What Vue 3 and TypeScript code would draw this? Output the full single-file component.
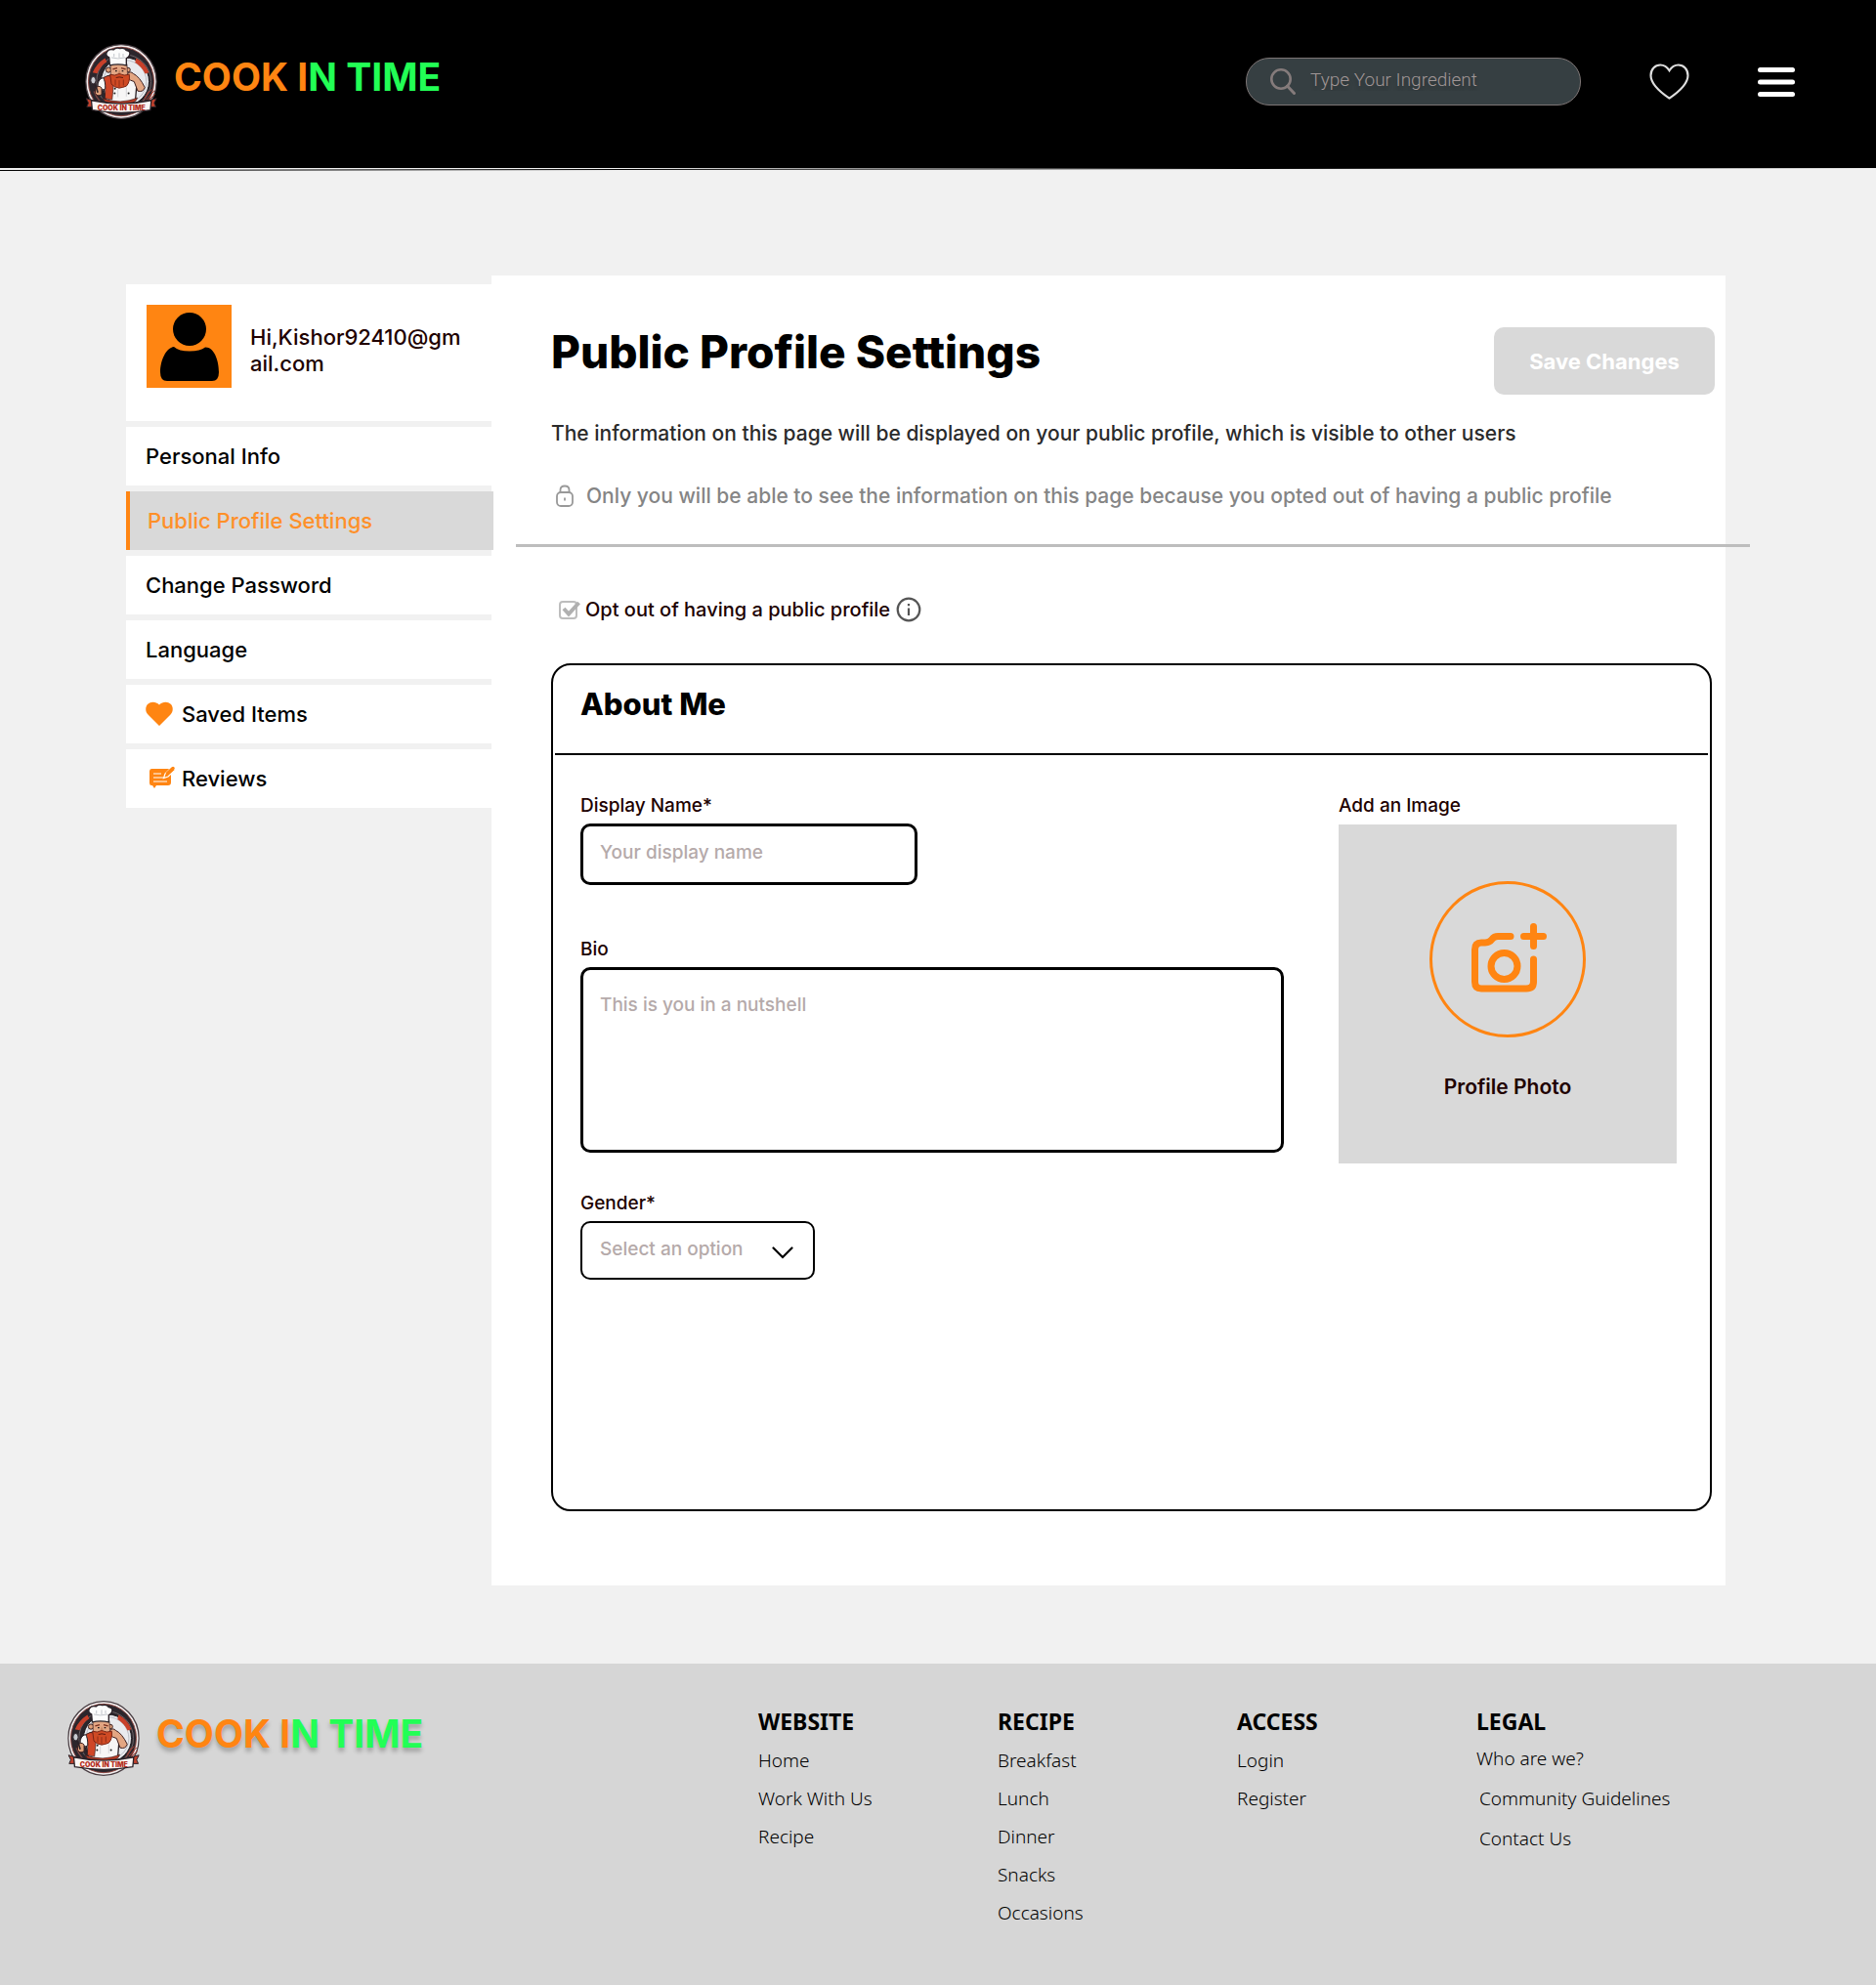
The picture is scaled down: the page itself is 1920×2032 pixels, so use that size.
<script setup lang="ts">
import { ref } from 'vue'

interface MenuItem {
  label: string
  icon?: 'heart' | 'review'
  active?: boolean
}

interface FooterColumn {
  title: string
  links: string[]
  loose?: boolean
}

const menu: MenuItem[] = [
  { label: 'Personal Info' },
  { label: 'Public Profile Settings', active: true },
  { label: 'Change Password' },
  { label: 'Language' },
  { label: 'Saved Items', icon: 'heart' },
  { label: 'Reviews', icon: 'review' },
]

const columns: FooterColumn[] = [
  { title: 'WEBSITE', links: ['Home', 'Work With Us', 'Recipe'] },
  { title: 'RECIPE', links: ['Breakfast', 'Lunch', 'Dinner', 'Snacks', 'Occasions'] },
  { title: 'ACCESS', links: ['Login', 'Register'] },
  { title: 'LEGAL', links: ['Who are we?', 'Community Guidelines', 'Contact Us'], loose: true },
]

const search = ref('')
const optOut = ref(true)
const displayName = ref('')
const bio = ref('')
const gender = ref('')
</script>

<template>
  <div class="page">
    <svg class="sprite" aria-hidden="true">
      <symbol id="chef" viewBox="57 184 222 232">
        <ellipse cx="168" cy="300" rx="109" ry="114" fill="#f3eeee" stroke="#4a3f44" stroke-width="4" />
        <ellipse cx="168" cy="300" rx="101" ry="106" fill="#2c262c" stroke="#8d4a45" stroke-width="3" />
        <circle cx="176" cy="300" r="84" fill="none" stroke="#6d6468" stroke-width="3" />
        <circle cx="180" cy="300" r="74" fill="#e9eaee" stroke="#1d191e" stroke-width="3" />
        <circle cx="180" cy="300" r="66" fill="none" stroke="#b9bcc4" stroke-width="3" />
        <path d="M80 272Q92 245 118 228L124 239Q104 252 94 275Z" fill="#c8402a" />
        <path d="M214 228Q242 242 254 272L242 276Q232 254 211 241Z" fill="#c8402a" />
        <path d="M84 330Q96 362 130 384M252 330Q240 366 205 386" fill="none" stroke="#7d4643" stroke-width="4" />
        <path d="M240 350L262 324M246 356L270 328M252 360L272 338" stroke="#a83a2c" stroke-width="3" />
        <!-- torso and apron -->
        <path d="M108 294Q124 280 142 280L192 280Q214 286 216 308L212 356Q168 372 122 358Z" fill="#f7f6f6" stroke="#2b2228" stroke-width="4" />
        <path d="M114 288Q126 280 138 282Q136 300 144 318L140 356L118 352Q122 318 114 288Z" fill="#cf4628" stroke="#3a1d1d" stroke-width="2" />
        <path d="M96 318Q94 294 112 288Q120 298 119 322Q108 330 96 318Z" fill="#fafafa" stroke="#2b2228" stroke-width="3" />
        <path d="M88 322Q98 308 108 320L108 340Q94 348 88 336Z" fill="#dfa07b" stroke="#3a1d1d" stroke-width="3" />
        <path d="M82 288L96 334" stroke="#2b2228" stroke-width="5" />
        <ellipse cx="82" cy="296" rx="8" ry="11" fill="#c9ccd2" stroke="#2b2228" stroke-width="3" />
        <path d="M188 276Q196 266 206 276Q224 284 241 318Q236 334 219 329L208 300Q196 298 188 288Z" fill="#e3a683" stroke="#3a1d1d" stroke-width="3" />
        <path d="M158 324V348M184 318V346" stroke="#c4c4ca" stroke-width="2" />
        <circle cx="149" cy="322" r="3" fill="#222" />
        <circle cx="148" cy="336" r="3" fill="#222" />
        <circle cx="191" cy="336" r="3" fill="#222" />
        <path d="M110 352Q168 372 218 350Q212 372 168 374Q124 372 110 352Z" fill="#b93a24" stroke="#3a1d1d" stroke-width="2" />
        <!-- head -->
        <circle cx="129" cy="264" r="8" fill="#dfa07b" stroke="#3a1d1d" stroke-width="3" />
        <circle cx="189" cy="264" r="7" fill="#dfa07b" stroke="#3a1d1d" stroke-width="3" />
        <path d="M135 246H186L188 286H136Z" fill="#e3a683" stroke="#3a1d1d" stroke-width="2" />
        <path d="M142 262L156 258M168 258L182 262" stroke="#7a2c1d" stroke-width="4" />
        <path d="M150 267h5M170 267h5" stroke="#1d1518" stroke-width="4" />
        <path d="M162 262L158 276H168Z" fill="#c98762" />
        <path d="M134 278Q148 284 162 276Q178 284 193 278Q196 302 184 314Q174 318 162 320Q146 318 138 308Z" fill="#cf4a24" stroke="#7a2415" stroke-width="3" />
        <path d="M150 294V312M162 296V316M175 294V312" stroke="#8f2c17" stroke-width="3" />
        <path d="M152 288Q162 284 174 288" fill="none" stroke="#5c1a10" stroke-width="3" />
        <!-- hat -->
        <path d="M133 250L131 226Q118 220 124 209Q130 198 144 202Q152 194 164 198Q178 194 184 204Q198 206 194 218Q192 226 184 228L184 250Q158 244 133 250Z" fill="#fcfcfc" stroke="#2b2228" stroke-width="4" />
        <path d="M138 226Q158 232 180 226M146 214V224M162 212V226M174 214V224" fill="none" stroke="#c3c6cc" stroke-width="3" />
        <!-- banner -->
        <path d="M60 352L82 358V378L62 378L67 366Z" fill="#c2412c" stroke="#2b2228" stroke-width="3" />
        <path d="M277 352L254 358V378L275 378L270 366Z" fill="#c2412c" stroke="#2b2228" stroke-width="3" />
        <path d="M76 358Q168 378 261 358L258 388Q168 404 79 388Z" fill="#fbf6f4" stroke="#2b2228" stroke-width="4" />
      </symbol>
    </svg>

    <header class="topbar">
      <a href="#" class="brand">
        <svg class="brand-mark" viewBox="0 0 222 232" aria-hidden="true">
          <use href="#chef" width="222" height="232" />
          <text x="112" y="205" text-anchor="middle" class="banner-text">COOK IN TIME</text>
        </svg>
        <span class="brand-name"><span class="orange">COOK I</span><span class="green">N TIME</span></span>
      </a>
      <div class="tools">
        <form class="search" role="search" @submit.prevent>
          <svg width="26" height="27" viewBox="0 0 26 27" fill="none" stroke="#857b7b" aria-hidden="true">
            <circle cx="11" cy="11" r="9.7" stroke-width="2.6" />
            <path d="M17.5 18L24.5 25.5" stroke-width="3" stroke-linecap="round" />
          </svg>
          <input v-model="search" type="search" placeholder="Type Your Ingredient" aria-label="Type Your Ingredient" />
        </form>
        <button type="button" class="icon-button" aria-label="Favourites">
          <svg width="41" height="37" viewBox="0 0 42 38" fill="none" stroke="#dedede" stroke-width="2.2">
            <path d="M21 7.500C18.500 3.500 15 1.500 11.500 1.500C6 1.500 1.500 6 1.500 12.500C1.500 21 10 29 21 36.500C32 29 40.500 21 40.500 12.500C40.500 6 36 1.500 30.500 1.500C27 1.500 23.500 3.500 21 7.500Z" />
          </svg>
        </button>
        <button type="button" class="icon-button" aria-label="Menu">
          <svg width="38" height="30" viewBox="0 0 38 30" fill="#fff">
            <rect width="38" height="5" rx="2.500" />
            <rect y="12.500" width="38" height="5" rx="2.500" />
            <rect y="25" width="38" height="5" rx="2.500" />
          </svg>
        </button>
      </div>
    </header>
    <svg class="topbar-rule" viewBox="0 0 1920 3" preserveAspectRatio="none" aria-hidden="true">
      <path d="M0 2.500L1920 -0.500" stroke="#000" stroke-width="1" />
    </svg>

    <main class="content">
      <aside class="sidebar">
        <div class="user">
          <svg class="avatar" viewBox="0 0 87 85" aria-hidden="true">
            <rect width="87" height="85" fill="#ff8512" />
            <circle cx="44" cy="25" r="17" />
            <path d="M28 43Q33 47.500 44 47.500Q55 47.500 60 43.500C69 43 74 57 74 69Q74 78 67 78H21Q14 78 14 69C14 57 20 44 28 43Z" />
          </svg>
          <p class="user-name">Hi,Kishor92410@gmail.com</p>
        </div>
        <nav class="menu" aria-label="Account">
          <a v-for="item in menu" :key="item.label" href="#" class="menu-item" :class="{ active: item.active }">
            <svg v-if="item.icon === 'heart'" class="menu-icon" viewBox="0 0 28 26" aria-hidden="true">
              <path d="M14 25L2.500 13.500C-0.500 10.500 -0.500 5.500 2.300 2.800C5.300 -0.200 10.500 -0.200 14 3.500C17.500 -0.200 22.700 -0.200 25.700 2.800C28.500 5.500 28.500 10.500 25.500 13.500Z" fill="#ff8512" />
            </svg>
            <svg v-else-if="item.icon === 'review'" class="menu-icon" viewBox="0 0 28 26" aria-hidden="true">
              <path d="M6 3H23Q26 3 26 6V17Q26 20 23 20H11L9 23L7 20H6Q4 20 4 17.500V5.500Q4 3 6 3Z" fill="#ff8512" />
              <path d="M8 8H16M8 12H18M8 16H22" stroke="#fff" stroke-width="1" />
              <path d="M18.500 12.500L20 8L27 1L30.500 4L23 11Z" fill="#ff8512" stroke="#fff" stroke-width="1.200" />
              <path d="M22.500 7.500L28 2.500" stroke="#ff8512" stroke-width="3.500" stroke-linecap="round" />
            </svg>
            <span>{{ item.label }}</span>
          </a>
        </nav>
      </aside>

      <section class="panel">
        <div class="panel-head">
          <h1>Public Profile Settings</h1>
          <button type="button" class="save" disabled>Save Changes</button>
        </div>
        <p class="lead">The information on this page will be displayed on your public profile, which is visible to other users</p>
        <p class="private">
          <svg width="20" height="24" viewBox="0 0 20 24" fill="none" stroke="#999" stroke-width="1.800" aria-hidden="true">
            <rect x="2" y="8" width="16" height="14" rx="4" />
            <path d="M5.500 8V5.500Q5.500 1.500 10 1.500Q14.500 1.500 14.500 5.500V8M10 13.500V16.500" />
          </svg>
          <span>Only you will be able to see the information on this page because you opted out of having a public profile</span>
        </p>
        <hr class="divider" />

        <div class="opt-out">
          <label class="check">
            <span class="check-box">
              <input v-model="optOut" type="checkbox" />
              <svg v-if="optOut" viewBox="0 0 22 20" fill="none" stroke="#b0b0b0" aria-hidden="true">
                <path d="M5 9L10 14.500L20.500 3" stroke-width="4" />
              </svg>
            </span>
            <span>Opt out of having a public profile</span>
          </label>
          <button type="button" class="icon-button" aria-label="More information">
            <svg width="26" height="26" viewBox="0 0 26 26" fill="none" stroke="#555" stroke-width="2.200">
              <circle cx="13" cy="13" r="11.300" />
              <path d="M13 11.500V19M13 7V9.300" />
            </svg>
          </button>
        </div>

        <form class="card" @submit.prevent>
          <h2>About Me</h2>
          <div class="card-body">
            <div class="fields">
              <div class="field">
                <label for="display-name">Display Name*</label>
                <input id="display-name" v-model="displayName" class="control name" type="text" placeholder="Your display name" />
              </div>
              <div class="field">
                <label for="bio">Bio</label>
                <textarea id="bio" v-model="bio" class="control bio" placeholder="This is you in a nutshell"></textarea>
              </div>
              <div class="field">
                <label for="gender">Gender*</label>
                <div class="select">
                  <select id="gender" v-model="gender" class="control">
                    <option value="" disabled>Select an option</option>
                    <option value="female">Female</option>
                    <option value="male">Male</option>
                    <option value="other">Other</option>
                  </select>
                  <svg viewBox="0 0 22 13" fill="none" stroke="#000" stroke-width="2.200" aria-hidden="true">
                    <path d="M1.500 1.500L11 11L20.500 1.500" stroke-linecap="round" />
                  </svg>
                </div>
              </div>
            </div>
            <div class="photo-field">
              <label for="photo">Add an Image</label>
              <button id="photo" type="button" class="photo">
                <svg width="160" height="160" viewBox="0 0 160 160" fill="none" stroke="#ff8512" aria-hidden="true">
                  <circle cx="80" cy="80" r="78.500" stroke-width="3" />
                  <g stroke-width="7" stroke-linecap="round" stroke-linejoin="round">
                    <path d="M83 56.500H70Q66 56.500 63.500 60Q61.500 63 57 63H53Q46.500 63 46.500 70V103Q46.500 110 53 110H99Q106.500 110 106.500 103V80" />
                    <circle cx="76.500" cy="87" r="13.500" />
                    <path d="M106.500 46.500V66.500M96.500 56.500H116.500" />
                  </g>
                </svg>
                <span>Profile Photo</span>
              </button>
            </div>
          </div>
        </form>
      </section>
    </main>

    <footer class="footer">
      <a href="#" class="brand shadowed">
        <svg class="brand-mark" viewBox="0 0 222 232" aria-hidden="true">
          <use href="#chef" width="222" height="232" />
          <text x="112" y="205" text-anchor="middle" class="banner-text">COOK IN TIME</text>
        </svg>
        <span class="brand-name"><span class="orange">COOK I</span><span class="green">N TIME</span></span>
      </a>
      <nav class="columns" aria-label="Footer">
        <div v-for="col in columns" :key="col.title" class="column">
          <h3>{{ col.title }}</h3>
          <ul :class="{ loose: col.loose }">
            <li v-for="link in col.links" :key="link"><a href="#">{{ link }}</a></li>
          </ul>
        </div>
      </nav>
    </footer>
  </div>
</template>

<style>
body {
  margin: 0;
  background: #f1f1f1;
}
</style>

<style scoped>
* {
  box-sizing: border-box;
}

.page {
  display: flex;
  flex-direction: column;
  min-height: 100vh;
  font-family: Inter, "Liberation Sans", sans-serif;
  font-size: 22px;
  font-weight: 500;
  color: #000;
}

h1,
h2,
h3,
p,
ul {
  margin: 0;
  padding: 0;
}

a {
  color: inherit;
  text-decoration: none;
}

svg {
  display: block;
  flex: none;
}

button,
input,
select,
textarea {
  font-family: inherit;
  font-weight: inherit;
}

.sprite {
  position: absolute;
  width: 0;
  height: 0;
}

.banner-text {
  font-family: Inter, sans-serif;
  font-size: 21px;
  font-weight: 900;
  fill: #b5301f;
}

/* Top bar */
.topbar {
  display: flex;
  align-items: center;
  justify-content: space-between;
  height: 172px;
  padding: 0 83px 5px 87px;
  background: #000;
}

.topbar-rule {
  width: 100%;
  height: 3px;
}

.brand {
  display: flex;
  align-items: center;
  gap: 17px;
}

.brand-mark {
  width: 74px;
  height: 77px;
}

.brand-name {
  padding-bottom: 10px;
  font-size: 39px;
  font-weight: 700;
  line-height: 48px;
  white-space: nowrap;
}

.orange {
  color: #ff8512;
}

.green {
  color: #22ff55;
}

.shadowed .brand-name {
  text-shadow: 0 4px 4px rgba(0, 0, 0, 0.25);
}

.tools {
  display: flex;
  align-items: center;
  gap: 70px;
}

.search {
  display: flex;
  align-items: center;
  gap: 15px;
  width: 343px;
  height: 49px;
  padding: 0 24px 1px;
  border: 1px solid #7d7575;
  border-radius: 24px;
  background: #363f42;
}

.search input {
  flex: 1;
  min-width: 0;
  padding: 0 0 4px;
  border: 0;
  outline: 0;
  background: none;
  color: #fff;
  font-family: Roboto, sans-serif;
  font-size: 19px;
  font-weight: 300;
}

.search input::placeholder {
  color: #a09696;
  opacity: 1;
  text-shadow: 0 4px 4px rgba(0, 0, 0, 0.25);
}

.icon-button {
  padding: 0;
  border: 0;
  background: none;
  cursor: pointer;
}

/* Body */
.content {
  display: flex;
  align-items: flex-start;
  padding: 107px 154px 80px 129px;
}

.sidebar {
  flex: none;
  width: 374px;
  margin-top: 9px;
}

.user {
  display: flex;
  gap: 19px;
  height: 140px;
  padding: 21px;
  background: #fff;
}

.avatar {
  width: 87px;
  height: 85px;
}

.user-name {
  width: 220px;
  padding-top: 20px;
  line-height: 27px;
  color: #200000;
  word-break: break-all;
}

.menu {
  display: flex;
  flex-direction: column;
  gap: 6px;
  margin-top: 6px;
}

.menu-item {
  display: flex;
  align-items: center;
  gap: 9px;
  height: 60px;
  padding-left: 20px;
  background: #fff;
}

.menu-item.active {
  position: relative;
  margin-right: -2px;
  padding-left: 18px;
  border-left: 4px solid #ff8512;
  background: #d9d9d9;
  color: #ff9029;
}

.menu-icon {
  width: 28px;
  height: 26px;
  overflow: visible;
}

.panel {
  flex: 1;
  min-width: 0;
  padding: 53px 0 76px 61px;
  background: #fff;
}

.panel-head {
  display: flex;
  justify-content: space-between;
  align-items: flex-start;
  padding-right: 11px;
}

h1 {
  font-size: 46px;
  font-weight: 800;
  line-height: 50px;
}

.save {
  width: 226px;
  height: 69px;
  border: 0;
  border-radius: 10px;
  background: #d9d9d9;
  color: #fff;
  font-size: 22px;
  font-weight: 700;
}

.lead {
  margin-top: 26px;
  font-size: 21px;
  line-height: 28px;
  color: #2b2b2b;
}

.private {
  display: flex;
  align-items: center;
  gap: 12px;
  margin-top: 36px;
  padding-left: 4px;
  font-size: 21px;
  line-height: 28px;
  color: #858585;
}

.divider {
  position: relative;
  height: 3px;
  margin: 35px -25px 0 -36px;
  border: 0;
  background: #bdbdbd;
}

.opt-out {
  display: flex;
  align-items: center;
  gap: 6px;
  margin-top: 50px;
  line-height: 28px;
}

.check {
  display: flex;
  align-items: center;
  gap: 5px;
  padding-left: 8px;
  font-size: 20px;
  color: #200000;
}

.check-box {
  position: relative;
  width: 22px;
  height: 20px;
}

.check-box input {
  display: block;
  width: 19px;
  height: 19px;
  margin: 1px 0 0;
  border: 2px solid #bdbdbd;
  border-radius: 4px;
  appearance: none;
}

.check-box svg {
  position: absolute;
  inset: 0;
  pointer-events: none;
}

.card {
  min-height: 868px;
  margin: 41px 14px 0 0;
  padding: 0 2px;
  border: 2px solid #000;
  border-radius: 20px;
}

h2 {
  height: 92px;
  padding: 18px 26px 0;
  border-bottom: 2px solid #000;
  font-size: 31px;
  font-weight: 800;
  line-height: 44px;
}

.card-body {
  display: flex;
  justify-content: space-between;
  gap: 56px;
  padding: 38px 32px 38px 26px;
  font-size: 19px;
}

.fields {
  display: flex;
  flex: 1;
  flex-direction: column;
  gap: 52px;
  max-width: 720px;
}

.field,
.photo-field {
  display: flex;
  flex-direction: column;
  align-items: flex-start;
  gap: 5px;
}

.field label,
.photo-field label {
  line-height: 27px;
  color: #200000;
}

.control {
  display: block;
  border: 3px solid #000;
  border-radius: 10px;
  outline: 0;
  background: #fff;
  color: #200000;
  font-size: 19px;
}

.control::placeholder {
  color: #b5aaaa;
  opacity: 1;
}

.name {
  width: 345px;
  height: 63px;
  padding: 0 17px 4px;
}

.bio {
  width: 100%;
  height: 190px;
  padding: 23px 17px;
  line-height: 26px;
  resize: none;
}

.field:last-child {
  margin-top: -14px;
}

.select {
  position: relative;
}

.select select {
  width: 240px;
  height: 60px;
  padding: 0 50px 3px 18px;
  border-width: 2px;
  color: #b5aaaa;
  appearance: none;
}

.select svg {
  position: absolute;
  top: 26px;
  right: 22px;
  width: 22px;
  height: 13px;
  pointer-events: none;
}

.photo-field {
  flex: none;
  gap: 6px;
  width: 346px;
}

.photo {
  display: flex;
  flex-direction: column;
  align-items: center;
  gap: 37px;
  width: 100%;
  height: 347px;
  padding: 58px 0 0;
  border: 0;
  background: #d9d9d9;
  color: #200000;
  font-size: 21px;
  font-weight: 600;
  line-height: 28px;
}

/* Footer */
.footer {
  display: flex;
  flex: 1;
  align-items: flex-start;
  justify-content: space-between;
  min-height: 329px;
  padding: 38px 164px 38px 69px;
  background: #d6d6d6;
}

.columns {
  display: flex;
  font-family: "Noto Sans", sans-serif;
}

.column {
  width: 245px;
}

.column:last-child {
  width: auto;
  min-width: 245px;
}

h3 {
  padding-top: 6px;
  font-size: 23px;
  font-weight: 700;
  line-height: 30px;
}

ul {
  display: flex;
  flex-direction: column;
  gap: 12px;
  padding-top: 12px;
  list-style: none;
}

li {
  font-size: 19px;
  font-weight: 300;
  line-height: 27px;
}

.loose {
  gap: 14px;
  padding-top: 10px;
}

.loose li + li {
  padding-left: 3px;
}
</style>
